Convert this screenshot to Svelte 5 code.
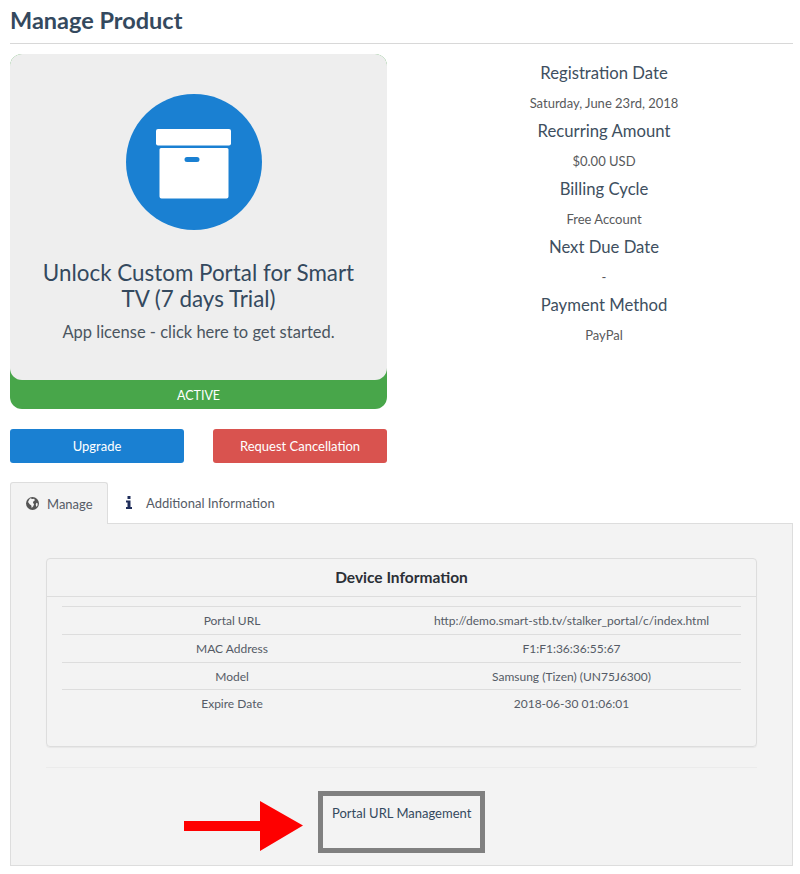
<script>
	const facts = [
		['Registration Date', 'Saturday, June 23rd, 2018'],
		['Recurring Amount', '$0.00 USD'],
		['Billing Cycle', 'Free Account'],
		['Next Due Date', '-'],
		['Payment Method', 'PayPal']
	];

	const device = [
		['Portal URL', 'http://demo.smart-stb.tv/stalker_portal/c/index.html'],
		['MAC Address', 'F1:F1:36:36:55:67'],
		['Model', 'Samsung (Tizen) (UN75J6300)'],
		['Expire Date', '2018-06-30 01:06:01']
	];
</script>

<div class="page">
	<h1>Manage Product</h1>

	<div class="overview">
		<div class="left">
			<div class="card">
				<div class="card-body">
					<div class="circle">
						<svg width="76" height="70" viewBox="0 0 76 70" fill="#fff">
							<rect x="0" y="0" width="75" height="16.5" rx="2" />
							<path fill-rule="evenodd" d="M5 19h66a1.5 1.5 0 0 1 1.5 1.500v47a2 2 0 0 1-2 2h-65a2 2 0 0 1-2-2v-47a1.500 1.500 0 0 1 1.500-1.500zM31 28a2.500 2.500 0 0 0 0 5h10a2.500 2.500 0 0 0 0-5z" />
						</svg>
					</div>
					<h2>Unlock Custom Portal for Smart TV (7 days Trial)</h2>
					<p>App license - click here to get started.</p>
				</div>
				<div class="status">ACTIVE</div>
			</div>
			<div class="actions">
				<button class="btn blue">Upgrade</button>
				<button class="btn red">Request Cancellation</button>
			</div>
		</div>

		<div class="facts">
			{#each facts as [label, value]}
				<h4>{label}</h4>
				<p>{value}</p>
			{/each}
		</div>
	</div>

	<div class="tabs">
		<div class="tab active">
			<svg width="13" height="13" viewBox="0 0 16 16">
				<circle cx="8" cy="8" r="8" fill="#555" />
				<path fill="#f3f3f3" d="M5 1.500l3 1 2-.500 1 2-2 1.500-.500 2 1.500 1-1 3-2 2-.500-3-2-1.500-2-3 1-2zM13 7l1.500 1-.500 3-1.500 1-.500-3z" />
			</svg>
			Manage
		</div>
		<div class="tab">
			<svg class="info" width="6" height="13" viewBox="0 0 6 13" fill="#1f2d5a">
				<rect x="1.500" y="0" width="3" height="3" />
				<path d="M0 4.500h4.500v6.500h1.500v2h-6v-2h1.500v-4.500h-1.500z" />
			</svg>
			Additional Information
		</div>
	</div>

	<div class="pane">
		<div class="panel">
			<div class="panel-head">Device Information</div>
			<div class="panel-body">
				{#each device as [label, value]}
					<div class="row">
						<span>{label}</span>
						<span>{value}</span>
					</div>
				{/each}
			</div>
		</div>
		<hr />
		<div class="url-line">
			<svg class="arrow" width="120" height="50" viewBox="0 0 120 50" fill="#fe0000">
				<path d="M0 20h76v-20l43 24.500-43 25.500v-20h-76z" />
			</svg>
			<div class="url-box">Portal URL Management</div>
		</div>
	</div>
</div>

<style>
	:global(body) {
		margin: 0;
		background: #fff;
	}

	.page {
		box-sizing: border-box;
		width: 800px;
		height: 874px;
		padding: 0 7px 0 10px;
		font-family: Lato, "Noto Sans", sans-serif;
		color: #58595b;
		overflow: hidden;
	}

	h1 {
		margin: 0;
		height: 43px;
		line-height: 40px;
		font-size: 23.5px;
		font-weight: 700;
		color: #34495e;
		border-bottom: 1px solid #d8d8d8;
	}

	.overview {
		display: flex;
		margin-top: 10px;
		height: 428px;
	}

	.left {
		width: 377px;
		flex-shrink: 0;
	}

	.card {
		height: 355px;
		border-radius: 12px;
		background: #48a64a;
		display: flex;
		flex-direction: column;
	}

	.card-body {
		height: 326px;
		box-sizing: border-box;
		background: #eee;
		border-radius: 12px;
		padding-top: 40px;
		text-align: center;
		display: flex;
		flex-direction: column;
		align-items: center;
	}

	.circle {
		width: 136px;
		height: 136px;
		margin-right: 9px;
		border-radius: 50%;
		background: #1a80d2;
		display: flex;
		align-items: center;
		justify-content: center;
	}

	.circle svg {
		margin-top: 3px;
	}

	.card-body h2 {
		margin: 30px 0 0;
		width: 330px;
		font-size: 22.4px;
		line-height: 26px;
		font-weight: 400;
		color: #34495e;
	}

	.card-body p {
		margin: 9px 0 0;
		font-size: 16.5px;
		line-height: 22px;
		color: #4a5560;
	}

	.status {
		flex: 1;
		display: flex;
		align-items: center;
		justify-content: center;
		padding-top: 1px;
		color: #fff;
		font-size: 12.5px;
	}

	.actions {
		display: flex;
		justify-content: space-between;
		margin-top: 20px;
	}

	.btn {
		width: 174px;
		height: 34px;
		border: none;
		border-radius: 3px;
		color: #fff;
		font-family: inherit;
		font-size: 13px;
		padding: 0;
	}

	.blue {
		background: #1a80d2;
	}

	.red {
		background: #d9534f;
	}

	.facts {
		flex: 1;
		text-align: center;
		padding: 9px 0 0 28px;
	}

	.facts h4 {
		margin: 0;
		height: 29px;
		line-height: 20px;
		font-size: 16.7px;
		font-weight: 400;
		color: #3e4f60;
	}

	.facts p {
		margin: 0;
		height: 29px;
		line-height: 22px;
		font-size: 13px;
		color: #58595b;
	}

	.tabs {
		display: flex;
		height: 41px;
		font-size: 13px;
	}

	.tab {
		display: flex;
		align-items: center;
		gap: 8px;
		padding: 0 16px;
		color: #555b66;
	}

	.tab svg {
		flex-shrink: 0;
	}

	.tab.active {
		width: 98px;
		box-sizing: border-box;
		padding-left: 15px;
		background: #f3f3f3;
		border: 1px solid #ddd;
		border-bottom: none;
		border-radius: 3px 3px 0 0;
		position: relative;
		z-index: 1;
		margin-bottom: -1px;
	}

	.info {
		margin: 0 6px 0 2px;
	}

	.pane {
		box-sizing: border-box;
		height: 343px;
		background: #f3f3f3;
		border: 1px solid #ddd;
		padding: 34px 35px 0;
	}

	.panel {
		height: 189px;
		box-sizing: border-box;
		border: 1px solid #ddd;
		border-radius: 4px;
		box-shadow: 0 1px 1px rgba(0, 0, 0, 0.05);
	}

	.panel-head {
		height: 37px;
		line-height: 37px;
		text-align: center;
		font-size: 15.5px;
		font-weight: 700;
		color: #2b2f36;
		border-bottom: 1px solid #ddd;
	}

	.panel-body {
		padding: 9px 15px 0;
	}

	.row {
		display: grid;
		grid-template-columns: 340px 1fr;
		height: 27px;
		line-height: 27px;
		border-top: 1px solid #ddd;
		text-align: center;
		font-size: 12px;
		color: #555b66;
	}

	.row:nth-child(3) {
		height: 26px;
	}

	hr {
		border: 0;
		border-top: 1px solid #ebebeb;
		margin: 20px 0 0;
	}

	.url-line {
		display: flex;
		align-items: flex-start;
		margin: 23px 0 0 138px;
		gap: 14px;
	}

	.arrow {
		margin-top: 10px;
	}

	.url-box {
		box-sizing: border-box;
		width: 167px;
		height: 62px;
		border: 5px solid #808080;
		padding: 9px 0 0 9px;
		font-size: 13px;
		line-height: 16px;
		color: #34495e;
		white-space: nowrap;
	}
</style>
